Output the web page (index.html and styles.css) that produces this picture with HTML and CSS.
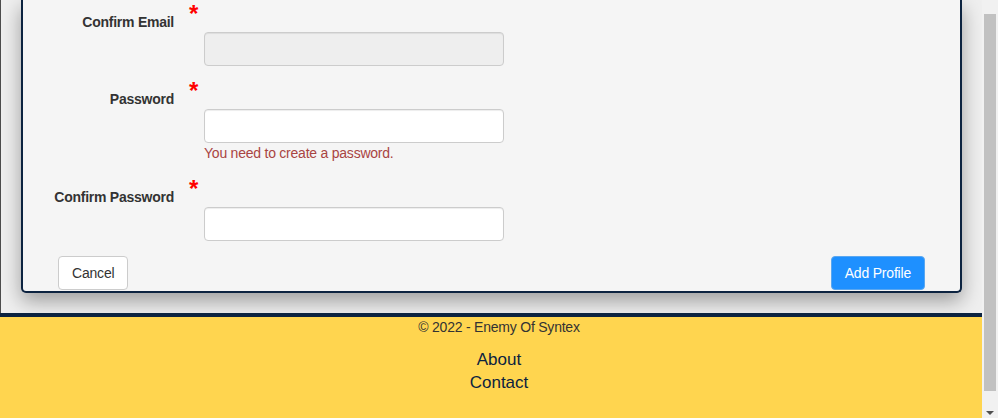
FILE: index.html
```html
<!DOCTYPE html>
<html lang="en">
<head>
<meta charset="utf-8">
<title>Add Profile</title>
<link rel="stylesheet" href="styles.css">
</head>
<body>
<div class="screen">
  <main class="main">
    <form class="card">
      <div class="group">
        <div class="label-row">
          <label class="label">Confirm Email</label>
          <span class="star">*</span>
        </div>
        <div class="field-row">
          <input class="input" type="email" disabled>
        </div>
      </div>
      <div class="group group-2">
        <div class="label-row">
          <label class="label">Password</label>
          <span class="star">*</span>
        </div>
        <div class="field-row">
          <input class="input" type="password">
          <div class="error">You need to create a password.</div>
        </div>
      </div>
      <div class="group group-3">
        <div class="label-row">
          <label class="label">Confirm Password</label>
          <span class="star">*</span>
        </div>
        <div class="field-row">
          <input class="input" type="password">
        </div>
      </div>
      <div class="actions">
        <button type="button" class="btn btn-default">Cancel</button>
        <button type="button" class="btn btn-primary">Add Profile</button>
      </div>
    </form>
  </main>
  <footer class="footer">
    <div class="copy">&copy; 2022 - Enemy Of Syntex</div>
    <ul class="links">
      <li><a href="#">About</a></li>
      <li><a href="#">Contact</a></li>
    </ul>
  </footer>
  <div class="scrollbar">
    <div class="thumb"></div>
    <div class="arrow"></div>
  </div>
</div>
</body>
</html>
```
FILE: styles.css
```css
* { box-sizing: border-box; }
html, body { margin: 0; padding: 0; }
body {
  font-family: "Liberation Sans", Arial, Helvetica, sans-serif;
  font-size: 14px;
  line-height: 20px;
  color: #333;
  background: #efefef;
  overflow: hidden;
}
.screen {
  position: relative;
  width: 998px;
  height: 418px;
  overflow: hidden;
  background: #efefef;
}
.main {
  width: 982px;
  height: 313px;
  border-left: 1px solid #4d4d4d;
}
.card {
  margin: 0 20px 0 20px;
  height: 293px;
  background: #f5f5f5;
  border: 2px solid #0c2340;
  border-top: none;
  border-radius: 0 0 5px 5px;
  box-shadow: 0 8px 20px rgba(0, 0, 0, 0.35);
  padding-top: 12px;
}
.label-row {
  display: flex;
  align-items: flex-start;
  height: 20px;
}
.label {
  width: 151px;
  text-align: right;
  font-weight: bold;
  font-size: 14px;
  line-height: 20px;
  letter-spacing: -0.25px;
  color: #333;
}
.star {
  margin-left: 15px;
  margin-top: -10px;
  font-size: 24px;
  font-weight: bold;
  line-height: 24px;
  color: #ff0000;
}
.field-row {
  padding-left: 181px;
}
.input {
  display: block;
  width: 300px;
  height: 34px;
  border: 1px solid #ccc;
  border-radius: 4px;
  background: #fff;
  box-shadow: inset 0 1px 1px rgba(0, 0, 0, 0.075);
  margin: 0;
  padding: 6px 12px;
  font: inherit;
}
.input:disabled { background: #eee; }
.group-2 { margin-top: 23px; }
.group-3 { margin-top: 24px; }
.error {
  color: #a94442;
  font-size: 14px;
  line-height: 20px;
  letter-spacing: -0.23px;
}
.actions {
  display: flex;
  justify-content: space-between;
  padding: 0 35px;
  margin-top: 15px;
}
.btn {
  height: 34px;
  padding: 6px 12px;
  font-family: inherit;
  font-size: 14px;
  line-height: 20px;
  border-radius: 4px;
  border: 1px solid #ccc;
  cursor: pointer;
}
.btn-default { background: #fff; color: #333; padding: 6px 13px; letter-spacing: -0.2px; }
.btn-primary { background: #1e90ff; color: #fff; border-color: #5aa7f0; padding: 6px 13px; letter-spacing: -0.2px; }
.footer {
  width: 998px;
  height: 105px;
  background: #ffd54f;
  border-top: 4px solid #0c2340;
  text-align: center;
}
.copy {
  font-size: 14px;
  line-height: 20px;
  letter-spacing: -0.22px;
  color: #333;
}
.links {
  list-style: none;
  margin: 11px 0 0;
  padding: 0;
}
.links li {
  font-size: 17px;
  line-height: 23px;
}
.links a {
  color: #0c2340;
  text-decoration: none;
}
.scrollbar {
  position: absolute;
  top: 0;
  right: 0;
  width: 16px;
  height: 418px;
  background: #f1f1f1;
}
.thumb {
  margin: 14px 0 0 2px;
  width: 12px;
  height: 377px;
  background: #c1c1c1;
}
.arrow {
  margin: 20px 0 0 4px;
  width: 0;
  height: 0;
  border-left: 4px solid transparent;
  border-right: 4px solid transparent;
  border-top: 4px solid #505050;
}
```
